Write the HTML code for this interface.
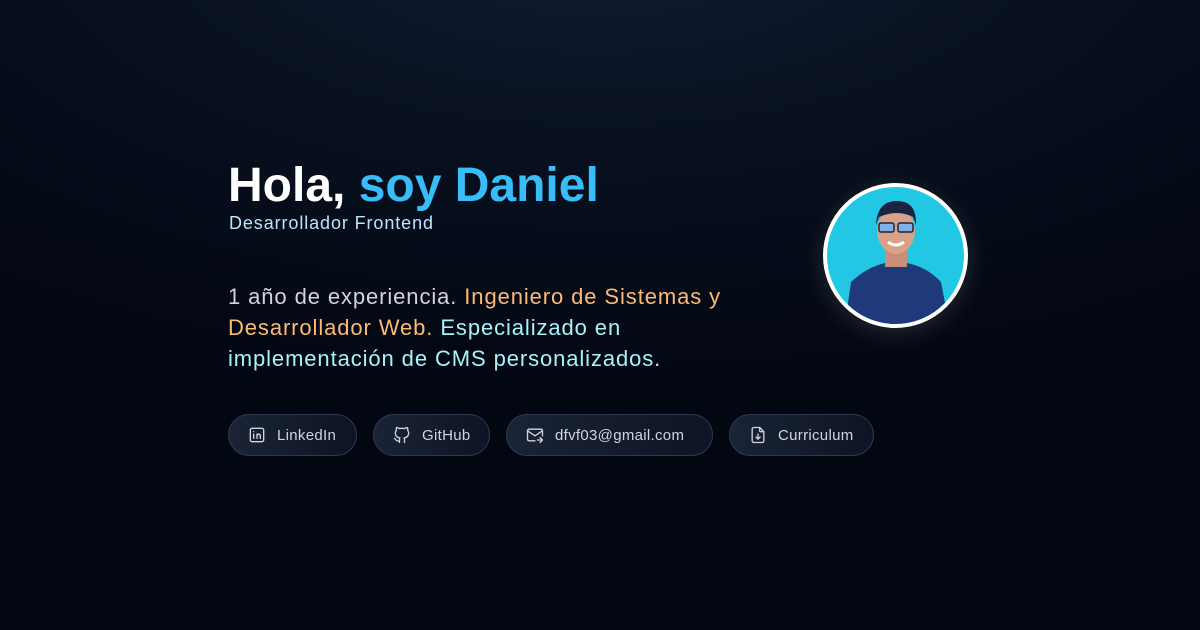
<!DOCTYPE html>
<html><head><meta charset="utf-8"><style>
*{margin:0;padding:0;box-sizing:border-box}
body{width:1200px;height:630px;overflow:hidden;font-family:"Liberation Sans",sans-serif;background:radial-gradient(ellipse 1000px 460px at 600px -80px,#111d33 0%,#08101f 50%,#030712 100%);position:relative}
h1{position:absolute;left:228px;top:158px;font-size:48px;font-weight:700;color:#fff;letter-spacing:0px;line-height:56px}
h1 span{color:#38bdf8}
.sub{position:absolute;left:229px;top:213px;font-size:18px;letter-spacing:0.9px;color:#bae6fd}
.p{position:absolute;left:228px;top:281px;width:525px;font-size:22px;letter-spacing:0.9px;line-height:31px;color:#d1d5db}
.o{color:#fdba74}.c{color:#a5f3fc}
.btn{position:absolute;top:414px;height:42px;border-radius:21px;border:1px solid #2c3a4f;background:linear-gradient(90deg,#1a2436,#0d1424);color:#d1d5db;font-size:15px;letter-spacing:0.3px;display:flex;align-items:center;padding-left:18px}
.btn svg{width:20px;height:20px;margin-right:10px;fill:none;stroke:#d1d5db;stroke-width:1.6;stroke-linecap:round;stroke-linejoin:round}
.av{position:absolute;left:823px;top:183px;width:145px;height:145px;border-radius:50%;border:4px solid #fff;background:#22c7e4;overflow:hidden;box-shadow:0 6px 24px rgba(255,255,255,.12)}
</style></head><body>
<h1>Hola, <span>soy Daniel</span></h1>
<div class="sub">Desarrollador Frontend</div>
<div class="p">1 año de experiencia. <span class="o">Ingeniero de Sistemas y Desarrollador Web.</span> <span class="c">Especializado en implementación de CMS personalizados.</span></div>
<div class="btn" style="left:228px;width:129px"><svg viewBox="0 0 24 24"><rect x="4" y="4" width="16" height="16" rx="2"/><path d="M8 11v5M8 8v.01M12 16v-5M16 16v-3a2 2 0 0 0-4 0"/></svg>LinkedIn</div>
<div class="btn" style="left:373px;width:117px"><svg viewBox="0 0 24 24"><path d="M9 19c-4.3 1.4-4.3-2.5-6-3m12 5v-3.5c0-1 .1-1.4-.5-2 2.8-.3 5.5-1.4 5.5-6a4.6 4.6 0 0 0-1.3-3.2 4.2 4.2 0 0 0-.1-3.2s-1.1-.3-3.5 1.3a12.3 12.3 0 0 0-6.2 0C6.5 2.8 5.4 3.1 5.4 3.1a4.2 4.2 0 0 0-.1 3.2A4.6 4.6 0 0 0 4 9.5c0 4.6 2.7 5.7 5.5 6-.6.6-.6 1.2-.5 2V21"/></svg>GitHub</div>
<div class="btn" style="left:506px;width:207px"><svg viewBox="0 0 24 24"><path d="M12 19H5a2 2 0 0 1-2-2V7a2 2 0 0 1 2-2h14a2 2 0 0 1 2 2v6"/><path d="M3 7l9 6 9-6M15 18h6M18 15l3 3-3 3"/></svg>dfvf03@gmail.com</div>
<div class="btn" style="left:729px;width:145px"><svg viewBox="0 0 24 24"><path d="M14 3v4a1 1 0 0 0 1 1h4"/><path d="M17 21H7a2 2 0 0 1-2-2V5a2 2 0 0 1 2-2h7l5 5v11a2 2 0 0 1-2 2zM12 11v6M9.5 14.5L12 17l2.5-2.5"/></svg>Curriculum</div>
<div class="av"><svg width="137" height="137" viewBox="0 0 137 137">
<path d="M18 137 L24 95 Q40 80 58 76 L80 76 Q100 80 114 95 L122 137Z" fill="#1e3a7a"/>
<rect x="58" y="62" width="22" height="18" fill="#c98e7a"/>
<ellipse cx="69" cy="44" rx="19" ry="23" fill="#d9a08a"/>
<path d="M49 38 Q50 14 70 14 Q90 14 89 38 L86 30 Q70 22 52 30Z" fill="#1c2340"/>
<rect x="52" y="36" width="15" height="9" rx="2" fill="#7fb0e8" stroke="#223" stroke-width="1.5"/>
<rect x="71" y="36" width="15" height="9" rx="2" fill="#7fb0e8" stroke="#223" stroke-width="1.5"/>
<path d="M61 55 Q69 61 77 55" stroke="#fff" stroke-width="3" fill="none"/>
</svg></div>
</body></html>
